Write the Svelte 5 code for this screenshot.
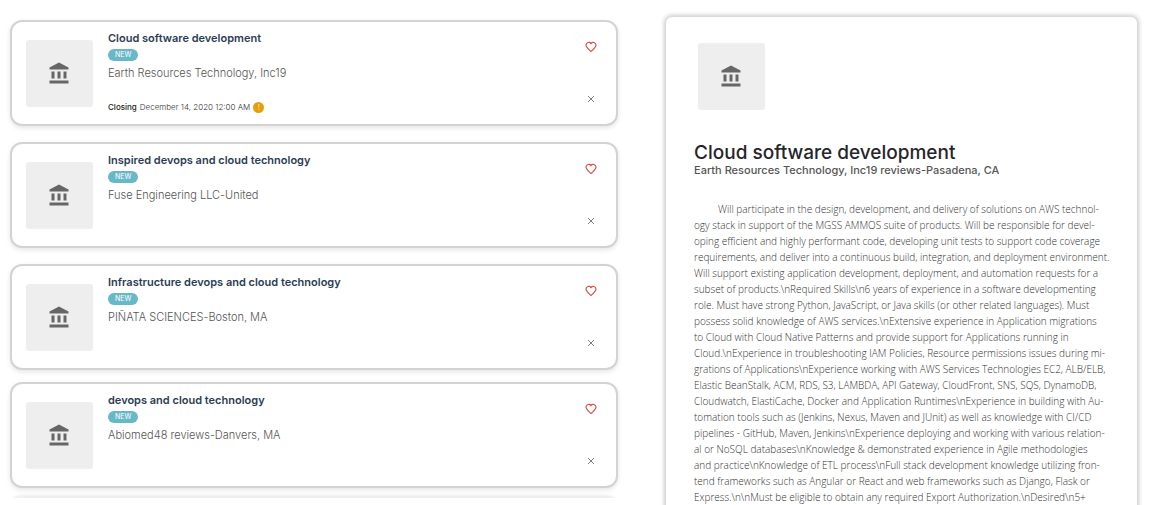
<script>
  const jobs = [
    {
      title: 'Cloud software development',
      company: 'Earth Resources Technology, Inc19',
      closing: 'December 14, 2020 12:00 AM'
    },
    { title: 'Inspired devops and cloud technology', company: 'Fuse Engineering LLC-United' },
    { title: 'Infrastructure devops and cloud technology', company: 'PIÑATA SCIENCES-Boston, MA' },
    { title: 'devops and cloud technology', company: 'Abiomed48 reviews-Danvers, MA' }
  ];

  const description = [
    'Will participate in the design, development, and delivery of solutions on AWS technol-',
    'ogy stack in support of the MGSS AMMOS suite of products. Will be responsible for devel-',
    'oping efficient and highly performant code, developing unit tests to support code coverage',
    'requirements, and deliver into a continuous build, integration, and deployment environment.',
    'Will support existing application development, deployment, and automation requests for a',
    'subset of products.\\nRequired Skills\\n6 years of experience in a software developmenting',
    'role. Must have strong Python, JavaScript, or Java skills (or other related languages). Must',
    'possess solid knowledge of AWS services.\\nExtensive experience in Application migrations',
    'to Cloud with Cloud Native Patterns and provide support for Applications running in',
    'Cloud.\\nExperience in troubleshooting IAM Policies, Resource permissions issues during mi-',
    'grations of Applications\\nExperience working with AWS Services Technologies EC2, ALB/ELB,',
    'Elastic BeanStalk, ACM, RDS, S3, LAMBDA, API Gateway, CloudFront, SNS, SQS, DynamoDB,',
    'Cloudwatch, ElastiCache, Docker and Application Runtimes\\nExperience in building with Au-',
    'tomation tools such as (Jenkins, Nexus, Maven and JUnit) as well as knowledge with CI/CD',
    'pipelines - GitHub, Maven, Jenkins\\nExperience deploying and working with various relation-',
    'al or NoSQL databases\\nKnowledge & demonstrated experience in Agile methodologies',
    'and practice\\nKnowledge of ETL process\\nFull stack development knowledge utilizing fron-',
    'tend frameworks such as Angular or React and web frameworks such as Django, Flask or',
    'Express.\\n\\nMust be eligible to obtain any required Export Authorization.\\nDesired\\n5+'
  ];
</script>

{#snippet logo()}
  <div class="thumb">
    <svg viewBox="0 0 20 22" width="20" height="22" aria-hidden="true">
      <path d="M10 0.5 0.5 5.5V7.5H19.500V5.500ZM2.500 9.500V16.500H5.500V9.500ZM8.500 9.500V16.500H11.500V9.500ZM14.500 9.500V16.500H17.500V9.500ZM0.500 18.500V21.500H19.500V18.500Z" />
    </svg>
  </div>
{/snippet}

<div class="page">
  <main class="list">
    {#each jobs as job}
      <article class="card">
        {@render logo()}
        <div class="info">
          <h2>{job.title}</h2>
          <span class="badge">NEW</span>
          <p class="company">{job.company}</p>
          {#if job.closing}
            <p class="closing">
              <b>Closing</b>
              <time>{job.closing}</time>
              <span class="alert">!</span>
            </p>
          {/if}
        </div>
        <div class="actions">
          <button class="save" aria-label="Save job">
            <svg viewBox="0 0 24 24" width="12" height="12" aria-hidden="true">
              <path d="M12 21 10.500 19.700C5.500 15.200 2 12.200 2 8.200A5.500 5.500 0 0 1 12 5.200 5.500 5.500 0 0 1 22 8.200C22 12.200 18.500 15.200 13.500 19.700Z" />
            </svg>
          </button>
          <button class="dismiss" aria-label="Dismiss job">
            <svg viewBox="0 0 8 8" width="8" height="8" aria-hidden="true">
              <path d="M1 1 7 7M7 1 1 7" />
            </svg>
          </button>
        </div>
      </article>
    {/each}
    <article class="card"></article>
  </main>

  <section class="detail">
    {@render logo()}
    <h1>Cloud software development</h1>
    <p class="employer">Earth Resources Technology, Inc19 reviews-Pasadena, CA</p>
    <p class="description">
      {#each description as line}
        <span>{line}</span>
      {/each}
    </p>
  </section>
</div>

<style>
  :global(body) {
    margin: 0;
    background: #fff;
  }
  .page {
    box-sizing: border-box;
    display: grid;
    grid-template-columns: 628fr 471fr;
    column-gap: 38px;
    height: 100vh;
    padding-right: 17px;
    overflow: hidden;
    font-family: Inter, 'Noto Sans', sans-serif;
  }
  h1,
  h2,
  p {
    margin: 0;
    white-space: nowrap;
  }
  .list {
    display: flex;
    flex-direction: column;
    gap: 16px;
    margin-bottom: 7px;
    padding: 20px 10px 0;
    overflow: hidden;
  }
  .card {
    box-sizing: border-box;
    display: flex;
    flex: none;
    min-height: 106px;
    padding: 8px 17px 8px 14px;
    border: 2px solid #d3d3d3;
    border-radius: 12px;
    background: #fff;
    box-shadow: 0 2px 5px rgba(0, 0, 0, 0.1);
  }
  .card:nth-child(4) {
    margin-top: -4px;
  }
  .card:last-child {
    margin-top: -8px;
    border-color: #f0f0f0;
    box-shadow: 0 0 3px 1px rgba(0, 0, 0, 0.08);
  }
  .thumb {
    box-sizing: border-box;
    display: grid;
    flex: none;
    place-items: center;
    width: 67px;
    height: 67px;
    padding: 0 2px 2px 0;
    border-radius: 3px;
    background: #eee;
  }
  .card .thumb {
    margin-top: 10px;
  }
  .thumb svg {
    fill: #666;
  }
  .info {
    display: flex;
    flex: 1;
    flex-direction: column;
    align-items: flex-start;
    min-width: 0;
    margin-left: 15px;
  }
  h2 {
    color: #2b3d55;
    font-size: 11px;
    font-weight: 600;
    line-height: 16px;
  }
  .badge {
    margin-top: 3px;
    padding: 0 7px;
    border-radius: 6px;
    background: #69b8c8;
    color: #fff;
    font-size: 7px;
    line-height: 12px;
  }
  .company {
    margin-top: 3px;
    color: #555;
    font-size: 11px;
    font-weight: 300;
    line-height: 18px;
  }
  .closing {
    display: flex;
    align-items: center;
    gap: 3px;
    margin-top: 18px;
    color: #333;
    font-size: 8px;
    font-weight: 300;
    line-height: 14px;
  }
  .closing b {
    color: #222;
    font-weight: 500;
  }
  .alert {
    width: 11px;
    border-radius: 50%;
    background: #e69f0a;
    color: #fff;
    line-height: 11px;
    text-align: center;
  }
  .actions {
    display: flex;
    flex-direction: column;
    gap: 36px;
    padding-top: 9px;
  }
  button {
    display: grid;
    place-items: center;
    width: 16px;
    height: 16px;
    padding: 0;
    border: 0;
    background: none;
    cursor: pointer;
  }
  button svg {
    fill: none;
  }
  .save {
    stroke: #cf5348;
    stroke-width: 2.4;
  }
  .dismiss {
    stroke: #808080;
    stroke-width: 1;
  }
  .detail {
    box-sizing: border-box;
    min-width: 0;
    margin: 17px 0 -10px;
    padding: 26px 27px 0 28px;
    border-radius: 6px;
    box-shadow: 0 0 4px 2px rgba(0, 0, 0, 0.2);
    overflow: hidden;
  }
  .detail .thumb {
    margin-left: 4px;
  }
  h1 {
    margin-top: 32px;
    color: #25252b;
    font-size: 19px;
    font-weight: 500;
    line-height: 22px;
  }
  .employer {
    color: #555;
    font-size: 11px;
    font-weight: 500;
    line-height: 12px;
  }
  .description {
    margin-top: 25px;
    color: #333;
    font-family: 'Open Sans', 'Noto Sans', sans-serif;
    font-size: 10px;
    font-weight: 300;
    line-height: 16px;
  }
  .description span {
    display: block;
  }
  .description span:first-child {
    padding-left: 24px;
  }
</style>
